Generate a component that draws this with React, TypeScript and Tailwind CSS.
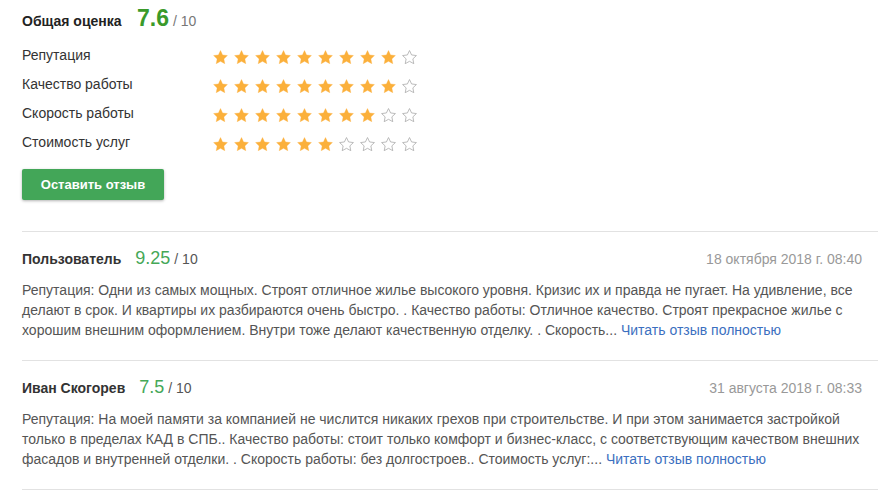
const ratings = [
  { label: "Репутация", value: 9 },
  { label: "Качество работы", value: 9 },
  { label: "Скорость работы", value: 8 },
  { label: "Стоимость услуг", value: 6 },
];

const reviews = [
  {
    name: "Пользователь",
    score: "9.25",
    date: "18 октября 2018 г. 08:40",
    text: "Репутация: Одни из самых мощных. Строят отличное жилье высокого уровня. Кризис их и правда не пугает. На удивление, все делают в срок. И квартиры их разбираются очень быстро. . Качество работы: Отличное качество. Строят прекрасное жилье с хорошим внешним оформлением. Внутри тоже делают качественную отделку. . Скорость...",
  },
  {
    name: "Иван Скогорев",
    score: "7.5",
    date: "31 августа 2018 г. 08:33",
    text: "Репутация: На моей памяти за компанией не числится никаких грехов при строительстве. И при этом занимается застройкой только в пределах КАД в СПБ.. Качество работы: стоит только комфорт и бизнес-класс, с соответствующим качеством внешних фасадов и внутренней отделки. . Скорость работы: без долгостроев.. Стоимость услуг:...",
  },
];

function Star({ filled }: { filled: boolean }) {
  return (
    <svg viewBox="0 0 24 24" className="w-[17px] h-[17px]">
      <path
        d="M12 2.2l2.95 6.2 6.8.85-5 4.7 1.28 6.75L12 17.4l-6.03 3.3 1.28-6.75-5-4.7 6.8-.85z"
        fill={filled ? "#fbb03b" : "#fff"}
        stroke={filled ? "#fbb03b" : "#a8a8a8"}
        strokeWidth={filled ? 0.5 : 1.1}
        strokeLinejoin="round"
      />
    </svg>
  );
}

export default function App() {
  return (
    <div className="w-[882px] h-[492px] bg-white overflow-hidden font-['Liberation_Sans',Arial,sans-serif] pl-[22px] pr-[4px]">
      <div className="pt-[1px]">
        <div className="flex items-baseline h-[30px]">
          <span className="w-[115px] text-[14px] font-bold text-[#222]">Общая оценка</span>
          <span className="text-[23px] font-bold text-[#3a9a2a]">7.6</span>
          <span className="ml-[4px] text-[14px] text-[#777]">/ 10</span>
        </div>
        <div className="flex flex-col mt-[10px]">
          {ratings.map((r) => (
            <div key={r.label} className="flex items-center h-[29px]">
              <span className="w-[190px] text-[14px] text-[#333]">{r.label}</span>
              <div className="flex gap-[4px] pt-[3px]">
                {Array.from({ length: 10 }).map((_, i) => (
                  <Star key={i} filled={i < r.value} />
                ))}
              </div>
            </div>
          ))}
        </div>
        <button className="mt-[12px] w-[142px] h-[31px] bg-[#43a658] rounded-[2px] text-white text-[13px] font-bold shadow-[0_1px_3px_rgba(0,0,0,0.3)]">
          Оставить отзыв
        </button>
      </div>

      <div className="mt-[31px] border-b border-[#e2e2e2]">
        {reviews.map((rv) => (
          <div key={rv.name} className="border-t border-[#e2e2e2] pt-[13px] pb-[20px]">
            <div className="flex items-baseline justify-between pr-[16px]">
              <div className="flex items-baseline">
                <span className="text-[14px] font-bold text-[#333]">{rv.name}</span>
                <span className="ml-[14px] text-[18px] text-[#45a857]">{rv.score}</span>
                <span className="ml-[4px] text-[14px] text-[#555]">/ 10</span>
              </div>
              <span className="text-[14px] text-[#999]">{rv.date}</span>
            </div>
            <p className="mt-[8px] w-[840px] text-[14px] leading-[20px] text-[#555]">
              {rv.text}{" "}
              <a className="text-[#3b6fc0]">Читать отзыв полностью</a>
            </p>
          </div>
        ))}
      </div>
    </div>
  );
}
